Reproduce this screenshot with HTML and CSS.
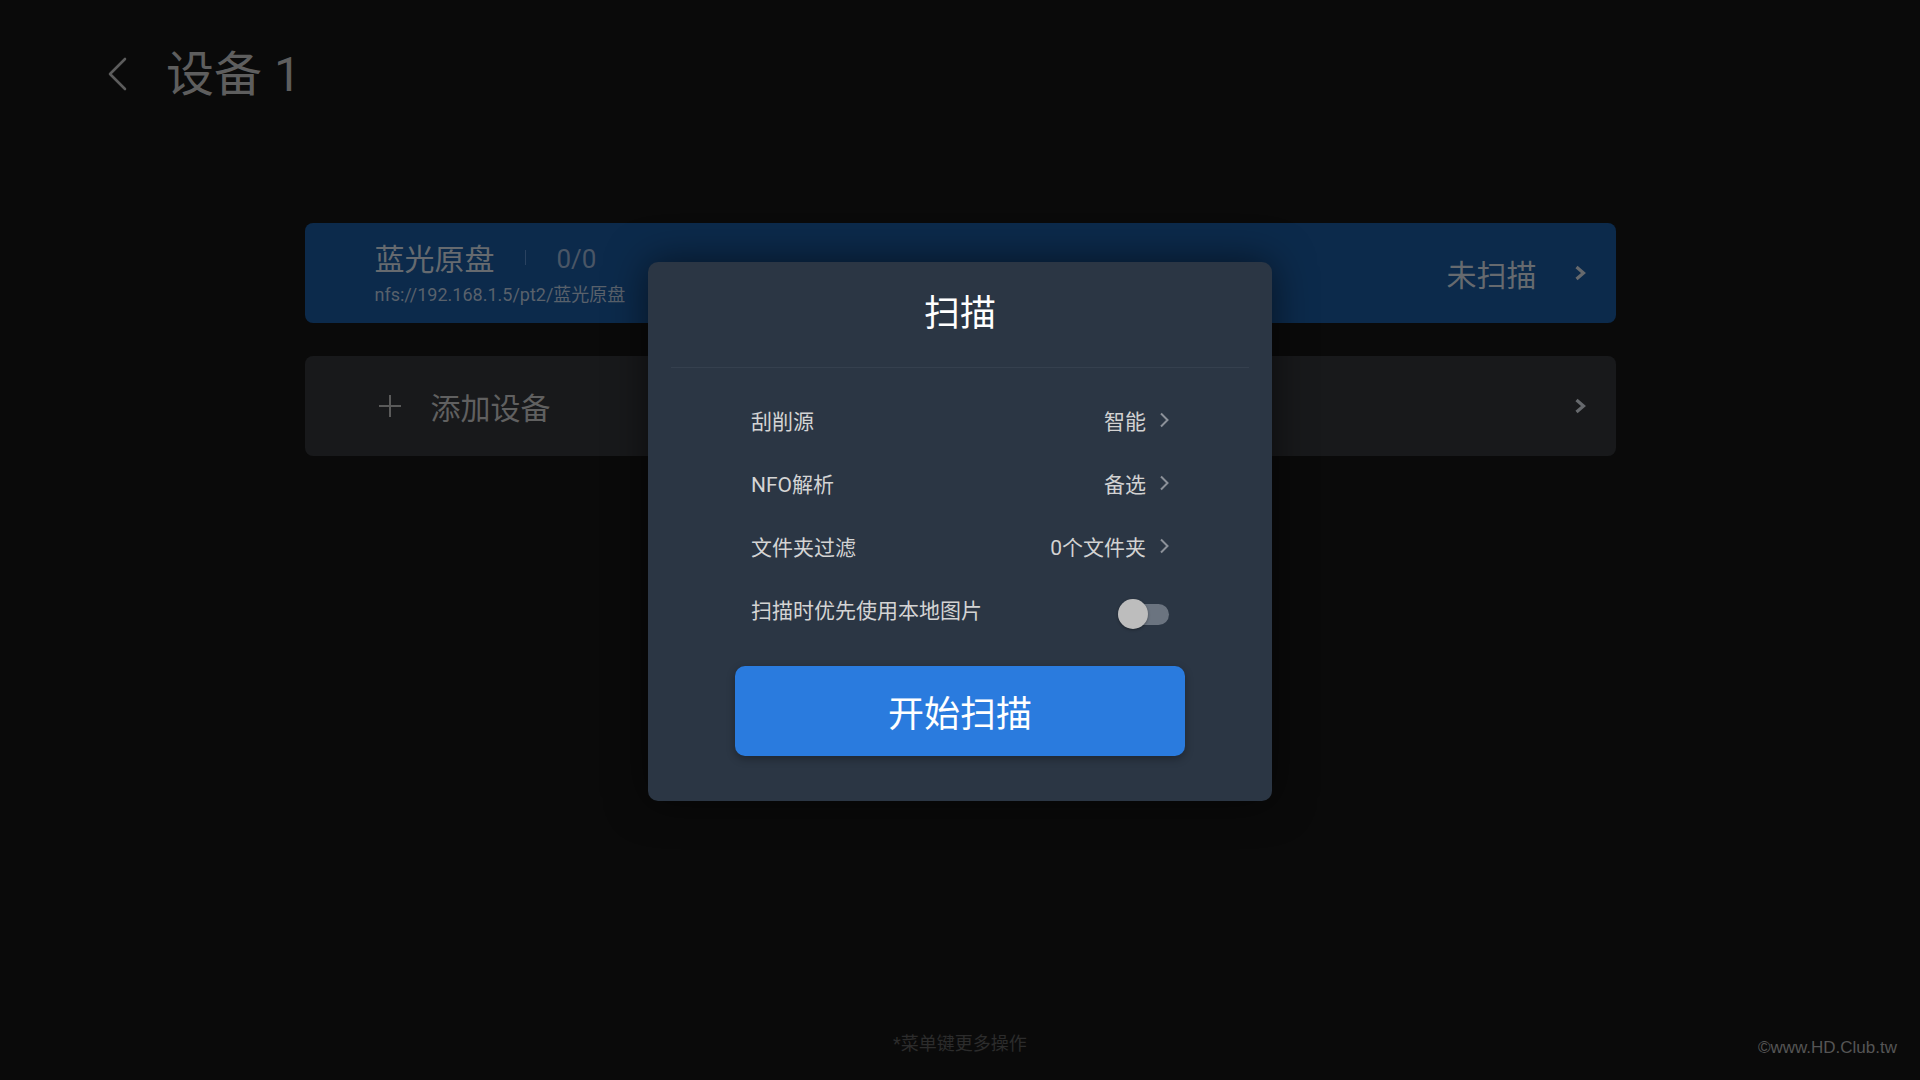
FILE: index.html
```html
<!DOCTYPE html>
<html lang="zh-CN">
<head>
    <meta charset="UTF-8">
    <meta name="viewport" content="width=device-width, initial-scale=1.0">
    <title>设备 1</title>
    <link rel="stylesheet" href="styles.css">
</head>
<body>
    <div class="page">
        <header class="header">
            <svg class="back" width="20" height="34" viewBox="0 0 20 34">
                <path d="M18 2 L3 17 L18 32" fill="none" stroke="currentColor" stroke-width="2.6" stroke-linecap="round" stroke-linejoin="round"/>
            </svg>
            <h1 class="title">设备 1</h1>
        </header>

        <main class="list">
            <div class="card card-active">
                <div class="card-info">
                    <div class="card-head">
                        <span class="card-name">蓝光原盘</span>
                        <span class="divider"></span>
                        <span class="card-count">0/0</span>
                    </div>
                    <div class="card-path">nfs://192.168.1.5/pt2/蓝光原盘</div>
                </div>
                <div class="card-status">未扫描</div>
                <svg class="card-arrow" width="12" height="16" viewBox="0 0 12 16">
                    <path d="M2.5 2 L9.5 8 L2.5 14" fill="none" stroke="currentColor" stroke-width="3.2" stroke-linejoin="miter"/>
                </svg>
            </div>

            <div class="card card-add">
                <svg class="plus" width="22" height="22" viewBox="0 0 22 22">
                    <path d="M11 0 V22 M0 11 H22" stroke="currentColor" stroke-width="2"/>
                </svg>
                <span class="add-label">添加设备</span>
                <svg class="card-arrow" width="12" height="16" viewBox="0 0 12 16">
                    <path d="M2.5 2 L9.5 8 L2.5 14" fill="none" stroke="currentColor" stroke-width="3.2" stroke-linejoin="miter"/>
                </svg>
            </div>
        </main>

        <footer class="hint">*菜单键更多操作</footer>
    </div>

    <div class="dialog">
        <div class="dialog-title">扫描</div>
        <div class="dialog-rows">
            <div class="row">
                <span class="row-label">刮削源</span>
                <span class="row-value">智能</span>
                <svg class="row-arrow" width="10" height="16" viewBox="0 0 10 16">
                    <path d="M2 1.5 L8.5 8 L2 14.5" fill="none" stroke="currentColor" stroke-width="2"/>
                </svg>
            </div>
            <div class="row">
                <span class="row-label">NFO解析</span>
                <span class="row-value">备选</span>
                <svg class="row-arrow" width="10" height="16" viewBox="0 0 10 16">
                    <path d="M2 1.5 L8.5 8 L2 14.5" fill="none" stroke="currentColor" stroke-width="2"/>
                </svg>
            </div>
            <div class="row">
                <span class="row-label">文件夹过滤</span>
                <span class="row-value">0个文件夹</span>
                <svg class="row-arrow" width="10" height="16" viewBox="0 0 10 16">
                    <path d="M2 1.5 L8.5 8 L2 14.5" fill="none" stroke="currentColor" stroke-width="2"/>
                </svg>
            </div>
            <div class="row">
                <span class="row-label">扫描时优先使用本地图片</span>
                <span class="switch"><span class="knob"></span></span>
            </div>
        </div>
        <button class="start-btn">开始扫描</button>
    </div>

    <div class="watermark">©www.HD.Club.tw</div>
</body>
</html>
```

FILE: styles.css
```css
body {
    margin: 0;
    background-color: #0a0a0a;
    font-family: Roboto, "Noto Sans CJK SC", sans-serif;
    color: #5c5c5c;
}
.page {
    min-height: 100vh;
    display: flex;
    flex-direction: column;
}
.header {
    height: 150px;
    display: flex;
    align-items: center;
    padding-left: 107px;
    color: #5c5c5c;
}
.back {
    margin-top: -2px;
}
.title {
    margin: 0 0 0 39px;
    font-size: 48px;
    font-weight: 400;
    line-height: 60px;
    color: #5e5e5e;
}
.list {
    width: 1311px;
    margin: 73px auto 0;
    display: flex;
    flex-direction: column;
    gap: 33px;
}
.card {
    height: 100px;
    border-radius: 8px;
    display: flex;
    align-items: center;
    padding: 0 30px 0 70px;
    box-sizing: border-box;
}
.card-active {
    background-color: #0c2a4b;
}
.card-info {
    flex: 1;
    display: flex;
    flex-direction: column;
    padding-bottom: 2px;
}
.card-head {
    display: flex;
    align-items: center;
    height: 38px;
}
.card-name {
    font-size: 30px;
    color: #666a6f;
}
.divider {
    width: 1px;
    height: 15px;
    background-color: #2a4260;
    margin: 2px 31px 0 30px;
}
.card-count {
    font-size: 26px;
    margin-top: 4px;
    color: #4a5666;
}
.card-path {
    font-size: 18px;
    line-height: 24px;
    margin-top: 7px;
    color: #59616b;
}
.card-status {
    font-size: 30px;
    color: #666a6f;
    margin-right: 37px;
}
.card-arrow {
    color: #66696d;
}
.card-add {
    background-color: #18191b;
    padding-left: 74px;
}
.plus {
    color: #5a5a5a;
}
.add-label {
    flex: 1;
    margin-left: 30px;
    font-size: 30px;
    color: #606060;
}
.hint {
    margin-top: auto;
    text-align: center;
    font-size: 18px;
    line-height: 24px;
    padding-bottom: 24px;
    color: #2c2c2c;
}

.dialog {
    position: absolute;
    left: 648px;
    top: 262px;
    width: 624px;
    height: 539px;
    box-sizing: border-box;
    background-color: #2b3644;
    border-radius: 10px;
    box-shadow: 0 0 40px rgba(0, 0, 0, 0.55);
    display: flex;
    flex-direction: column;
    align-items: center;
}
.dialog-title {
    width: 578px;
    height: 106px;
    box-sizing: border-box;
    padding-top: 28px;
    text-align: center;
    font-size: 36px;
    line-height: 48px;
    color: #ffffff;
    border-bottom: 1px solid #35404e;
}
.dialog-rows {
    width: 418px;
    padding-top: 20px;
}
.row {
    height: 63px;
    display: flex;
    align-items: center;
    font-size: 21px;
    color: #d4d4d4;
}
.row-label {
    flex: 1;
}
.row-value {
    color: #d2d2d2;
}
.row-arrow {
    margin-left: 13px;
    color: #8c9199;
}
.switch {
    position: relative;
    width: 51px;
    height: 21px;
    border-radius: 11px;
    background-color: #6b7480;
    margin-top: 11px;
}
.knob {
    position: absolute;
    left: 0;
    top: -5px;
    width: 30px;
    height: 30px;
    border-radius: 50%;
    background-color: #bdbdbd;
    box-shadow: 0 1px 3px rgba(0, 0, 0, 0.35);
}
.start-btn {
    margin-top: 26px;
    width: 450px;
    height: 90px;
    border: none;
    border-radius: 10px;
    background-color: #2a7bde;
    color: #ffffff;
    font-family: Roboto, "Noto Sans CJK SC", sans-serif;
    font-size: 36px;
    box-shadow: 0 3px 8px rgba(0, 0, 0, 0.3);
}
.watermark {
    position: absolute;
    right: 23px;
    bottom: 22px;
    font-family: "Liberation Sans", sans-serif;
    font-size: 17px;
    color: #555555;
}
```
